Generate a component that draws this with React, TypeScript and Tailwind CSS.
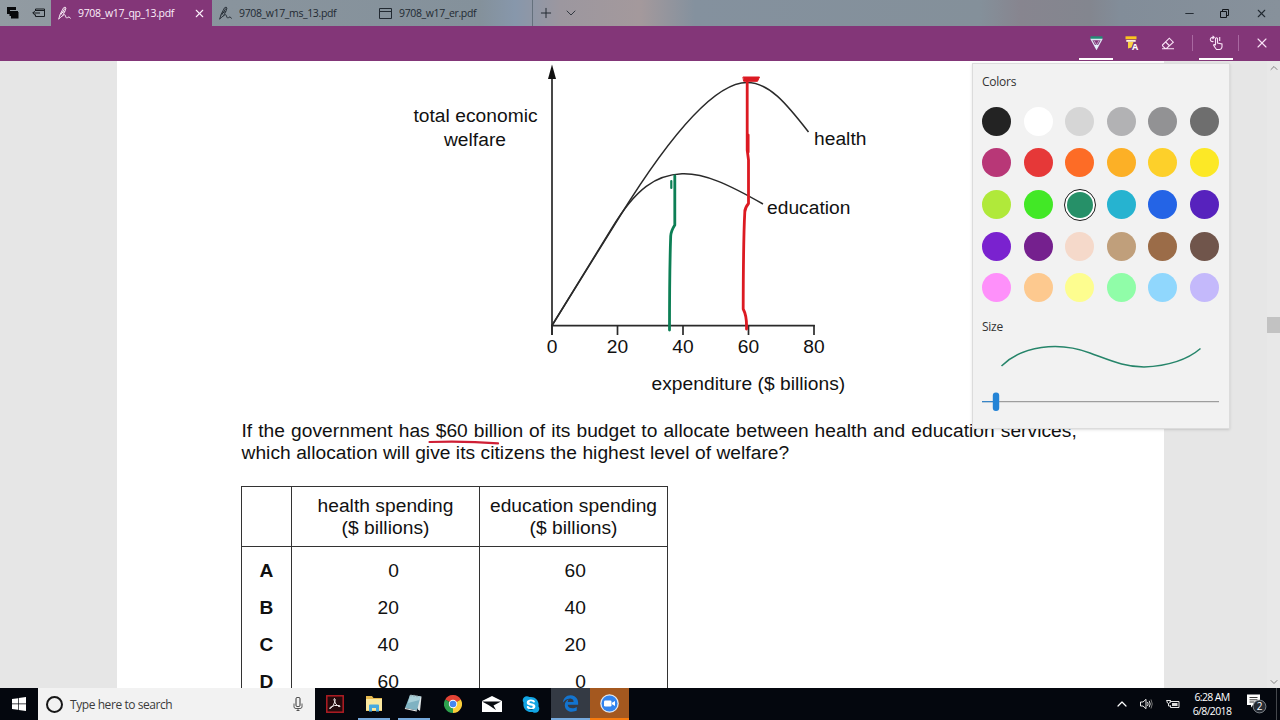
import { ChevronDown, ChevronUp, Minus, Plus, X } from 'lucide-react';
import { FaEdgeLegacy, FaSkype } from 'react-icons/fa6';

const COLORS = [
  '#232323', '#ffffff', '#d6d6d6', '#b2b2b4', '#929294', '#6e6e6e',
  '#b83777', '#e63838', '#fd6c26', '#fcb026', '#fdd02a', '#fce826',
  '#b0e93a', '#42e826', '#269068', '#26b3d0', '#2464e6', '#5722bd',
  '#7a22cf', '#75208e', '#f5d9ca', '#c09f7b', '#9b6c48', '#70554b',
  '#fe90fa', '#fdc98f', '#fdfd8f', '#90fda8', '#90d7fd', '#c4b9fb',
];
const SELECTED = '#269068';

const ROWS = [
  { key: 'A', health: '0', education: '60' },
  { key: 'B', health: '20', education: '40' },
  { key: 'C', health: '40', education: '20' },
  { key: 'D', health: '60', education: '0' },
];

const TICKS = [
  { x: 552, label: '0' },
  { x: 617.5, label: '20' },
  { x: 683, label: '40' },
  { x: 748.5, label: '60' },
  { x: 814, label: '80' },
];

function InkIcon({ className }: { className: string }) {
  return (
    <svg viewBox="0 0 13 14" className={className} fill="none" stroke="currentColor" strokeWidth="0.9" strokeLinecap="round">
      <path d="M.8 12.8 2 8.500 5.500 1.800Q7.500.300 8 2 7.500 5 4.600 9.600L.8 12.800M2.600 9 6.800 2.600M3.500 7 6.500 5.500M4.600 9.800Q7 7.600 7.400 9.600T8.600 12 10 11.200 12.500 12.200" />
    </svg>
  );
}

function TabBar() {
  return (
    <div className="flex h-[26px] shrink-0 items-center bg-[linear-gradient(90deg,#929ba2_0,#89949d_230px,#84919b_480px,#8797ab_515px,#9c979f_560px,#a4999c_640px,#84919e_695px,#84909a_980px,#87858f_1020px,#83868f_1090px,#828d99_1120px,#87919b_1280px)] text-[#222a32]">
      <div className="flex w-[51px] shrink-0 items-center gap-[13px] pl-[7px]">
        <svg viewBox="0 0 12 12" className="h-3 w-3">
          <path d="M0 0h9v3H3v4H0z" fill="#08090b" />
          <path d="M2.5 4H11v3.500H5v1.500H2.500z" fill="#08090b" />
          <path d="M4 5h7.500v6.500H4z" fill="#08090b" />
        </svg>
        <svg viewBox="0 0 13 10" className="h-2.5 w-[13px]" fill="none" stroke="#161a1f">
          <path d="M3.500 3V1h9v7.500h-9v-2M3.500 2.500h9M8 5H.8M3 2.800.8 5 3 7.200" />
        </svg>
      </div>
      <div className="flex h-full w-[161px] shrink-0 items-center bg-[#833678] pl-[7px] text-[#fdf0fb]">
        <InkIcon className="mr-[7px] h-3.5 w-[13px]" />
        <span className="w-[115px] pt-px text-[10.5px] tracking-[-0.330px]">9708_w17_qp_13.pdf</span>
        <X className="h-[13px] w-[13px]" strokeWidth={2} />
      </div>
      <div className="flex h-full w-[160px] shrink-0 items-center pl-[7px]">
        <InkIcon className="mr-[7px] h-3.5 w-[13px]" />
        <span className="pt-px text-[10.5px] tracking-[-0.370px]">9708_w17_ms_13.pdf</span>
      </div>
      <div className="flex h-full w-[161px] shrink-0 items-center border-r border-[#65717d] pl-[7px]">
        <svg viewBox="0 0 13 11" className="mr-[7px] h-[11px] w-[13px]" fill="none" stroke="currentColor">
          <path d="M.5.5h12v10H.5zM.5 3.500h12" />
        </svg>
        <span className="pt-px text-[10.5px] tracking-[-0.370px]">9708_w17_er.pdf</span>
      </div>
      <Plus className="ml-[5px] h-[16px] w-[16px]" strokeWidth={1.5} />
      <ChevronDown className="ml-[9px] h-[16px] w-[16px]" strokeWidth={1.3} />
      <div className="ml-auto flex items-center pr-3">
        <Minus className="h-[13px] w-[13px]" strokeWidth={1.8} />
        <svg viewBox="0 0 9 9" className="ml-6 h-[9px] w-[9px]" fill="none" stroke="#12161b">
          <path d="M.5 2.500h6v6h-6zM2.500 2.500v-2h6v6h-2" />
        </svg>
        <X className="ml-[26px] h-[13px] w-[13px]" strokeWidth={2} />
      </div>
    </div>
  );
}

function Toolbar() {
  return (
    <div className="flex h-[35px] shrink-0 justify-end bg-[#833678] text-[#f9e3f6]">
      <div className="flex h-[34px] w-[34px] justify-center border-b-2 border-white pt-[10px]">
        <svg viewBox="0 0 13 14" className="h-3.5 w-[13px]" fill="none">
          <path d="M.5.300h12v2.700H.5z" fill="#238b76" />
          <path d="M1.300 3.500h10.400L6.500 13z" stroke="#dce6f3" strokeWidth="1.300" />
          <path d="M4.300 9h4.400L6.500 13.300z" fill="#e8f0fa" />
          <path d="M3.800 4.500 6.500 9l2.700-4.500" stroke="#c9c3dc" strokeWidth=".8" />
        </svg>
      </div>
      <div className="flex w-[38px] justify-center pt-[10px]">
        <svg viewBox="0 0 16 16" className="ml-[2px] h-4 w-4">
          <path d="M.5.300h11v3H.5z" fill="#fbc51e" />
          <path d="M1.300 4h9.400v1.800H1.300z" fill="#fff3d8" />
          <path d="M3 6h5.500L6.500 11.500l-3.500 1z" fill="#fbd040" />
          <text x="7" y="13.600" fontSize="9" fontWeight="700" fill="#fff" fontFamily="Open Sans, sans-serif">A</text>
        </svg>
      </div>
      <div className="flex w-[34px] justify-center pt-[11px]">
        <svg viewBox="0 0 14 13" className="h-[13px] w-3.5" fill="none" stroke="currentColor" strokeWidth="1.100">
          <path d="M1.500 8 8.300 1.200 12.300 5.200 5.500 11.500H4.200L1.500 8.800zM4.700 5l4 4M1 11.700h12" />
        </svg>
      </div>
      <div className="mt-[9px] ml-[7px] h-4 w-px bg-[#a968a1]" />
      <div className="ml-[6px] flex h-[34px] w-[34px] justify-center border-b-2 border-white pt-[9px]">
        <svg viewBox="0 0 15 16" className="h-4 w-[15px]" fill="none" stroke="currentColor" strokeWidth="1.100">
          <path d="M6.500 10V3.500q1-1.500 2 0V8l4.500 1v3q-.5 2.500-2.500 2.500H7.500Q5.500 12 4.500 10q1-1 2 .5M4.500 6.500Q1.500 7 1.300 4.500 1.500 2 5 2.300M3.500.800 5.200 2.300 3.500 4M10.700 2v4" />
        </svg>
      </div>
      <div className="mt-[9px] ml-[5px] h-4 w-px bg-[#a968a1]" />
      <X className="mt-[9px] mr-[10px] ml-[15px] h-[16px] w-[16px]" strokeWidth={1.7} />
    </div>
  );
}

function WelfareChart() {
  return (
    <svg viewBox="117 61 1047 355" className="block h-[355px] w-[1047px]" fill="none" fontFamily="Liberation Sans, Arial, sans-serif">
      <g stroke="#2a2a2a" strokeWidth="1.700">
        <path d="M552 72V335M551 325.600H814.800" />
        {TICKS.map((t) => (
          <path key={t.label} d={`M${t.x} 325V335`} />
        ))}
        <path d="M552 325.500 620 216C656 158 709 82.500 747 82.500C769 82.500 786 103 808.500 132" strokeWidth="1.500" />
        <path d="M552 325.500 612 228C636 188 656 175 682 173.800C704 173 728 184 763 204" strokeWidth="1.500" />
      </g>
      <path d="M552 64.500 556 79H548z" fill="#111" />
      <g fill="#111" fontSize="19.200" letterSpacing="0.030">
        <text x="475.500" y="122" textAnchor="middle">total economic</text>
        <text x="475" y="145.500" textAnchor="middle">welfare</text>
        <text x="814" y="144.500">health</text>
        <text x="767" y="213.500">education</text>
        {TICKS.map((t) => (
          <text key={t.label} x={t.x} y="353" textAnchor="middle">{t.label}</text>
        ))}
        <text x="651.500" y="390">expenditure ($ billions)</text>
      </g>
      {/* ink strokes */}
      <g strokeLinecap="round" strokeLinejoin="round">
        <path d="M674.800 176V225Q671 231 670.700 236 669.500 270 669.500 330" stroke="#0c7f55" strokeWidth="2.800" />
        <path d="M671.300 181V188" stroke="#0c7f55" strokeWidth="2.200" />
        <path d="M747.200 82V150L748.500 160V203.500Q744.800 208 744.800 212 743.300 240 743.200 309 747 316 746.500 329" stroke="#dc1a22" strokeWidth="2.800" />
        <path d="M748.300 135V152" stroke="#dc1a22" strokeWidth="2.500" />
        <path d="M743.300 77H759.500L757.500 81.300H744z" fill="#dc1a22" stroke="#dc1a22" strokeWidth="1" />
      </g>
    </svg>
  );
}

function AnswerTable() {
  return (
    <div className="mt-[21px] ml-[124px] w-[427px] border border-b-0 border-[#333]">
      <div className="flex h-[60px] border-b border-[#333] text-center leading-[22px]">
        <div className="w-[50px] border-r border-[#333]" />
        <div className="w-[188px] border-r border-[#333] pt-2">health spending<br />($ billions)</div>
        <div className="flex-1 pt-2">education spending<br />($ billions)</div>
      </div>
      {/* the page runs on below the visible area */}
      <div className="flex h-[160px] leading-[37px]">
        <div className="w-[50px] border-r border-[#333] pt-[5px] text-center font-bold">
          {ROWS.map((row) => <div key={row.key}>{row.key}</div>)}
        </div>
        <div className="w-[188px] border-r border-[#333] pt-[5px] pr-[80px] text-right">
          {ROWS.map((row) => <div key={row.key}>{row.health}</div>)}
        </div>
        <div className="flex-1 pt-[5px] pr-[81px] text-right">
          {ROWS.map((row) => <div key={row.key}>{row.education}</div>)}
        </div>
      </div>
    </div>
  );
}

function PenPanel() {
  return (
    <div className="absolute top-[2px] left-[972px] h-[366px] w-[258px] border border-[#dcdcdc] bg-[#f2f2f2] px-[9px] text-[12px] text-[#333] shadow-sm">
      <div className="mt-[9px] h-[17px] leading-[17px] tracking-[-0.250px]">Colors</div>
      <div className="mt-[16.700px] grid grid-cols-[repeat(6,29px)] gap-x-[12.600px] gap-y-[12.700px]">
        {COLORS.map((c) => (
          <div key={c} className="relative h-[29px] w-[29px]">
            {c === SELECTED && <div className="absolute -inset-[1.500px] rounded-full border-[1.500px] border-[#1c1c1c] bg-white" />}
            <div
              className={c === SELECTED ? 'absolute inset-[1.500px] rounded-full' : 'absolute inset-0 rounded-full'}
              style={{ backgroundColor: c }}
            />
          </div>
        ))}
      </div>
      <div className="mt-[15.500px] h-[17px] leading-[17px] tracking-[-0.250px]">Size</div>
      <svg viewBox="982 335 237 80" className="mt-[0.500px] block h-[80px] w-[237px]" fill="none">
        <path d="M1001.500 366C1022 346 1058 341 1090 353C1112 361 1125 367 1144 367C1166 366 1186 361 1200.500 348.500" stroke="#26856a" strokeWidth="1.500" />
        <path d="M982 401.700H1219" stroke="#8b8b8b" />
        <path d="M982 401.700H996" stroke="#1f7fd0" />
        <rect x="992.800" y="392.500" width="6.400" height="18.500" rx="3" fill="#2484d6" />
      </svg>
    </div>
  );
}

function Taskbar() {
  return (
    <div className="flex h-8 shrink-0 bg-[#04070e] text-white">
      <div className="flex w-[38px] items-center justify-center">
        <svg viewBox="0 0 14 14" className="h-3.5 w-3.5" fill="#fff">
          <path d="M0 2 6 1.200V6.600H0zM6.700 1.100 14 0V6.600H6.700zM0 7.300H6V12.700L0 11.900zM6.700 7.300H14V14L6.700 12.900z" />
        </svg>
      </div>
      <div className="flex w-[277px] items-center bg-[#f2f2f2] pr-[12px] pl-2 text-[#3b3b3b]">
        <div className="h-[17px] w-[17px] rounded-full border-[2.500px] border-[#171717]" />
        <span className="ml-[7px] pt-[2px] text-[12px] tracking-[-0.430px]">Type here to search</span>
        <svg viewBox="0 0 10 14" className="ml-auto h-3.5 w-2.5" fill="none" stroke="#333">
          <rect x="3" y=".5" width="4" height="9" rx="1.200" />
          <path d="M1 6.500V10Q1.200 11.500 3 11.500H7Q8.800 11.500 9 10V6.500M5 11.500V13.500M3.500 13.500H6.500" strokeWidth=".8" />
        </svg>
      </div>
      <div className="flex w-[39px] items-center justify-center">
        <svg viewBox="0 0 18 18" className="h-[18px] w-[18px]" fill="none">
          <rect x=".8" y=".8" width="16.400" height="16.400" fill="#240b0d" stroke="#b11d24" strokeWidth="1.500" />
          <path d="M8.500 3.500Q9.500 3.500 9 6 8 10.500 4.500 13.500 3 14 4 12.500 8 9.500 13.500 10.500 15 11.500 13 11.800 9 9.500 8 5 7.800 3.500 8.500 3.500z" stroke="#f0e8e8" />
        </svg>
      </div>
      <div className="flex w-[40px] justify-center">
        <div className="flex w-8 justify-center border-b-2 border-[#76a9dc] pt-[7px]">
          <svg viewBox="0 0 18 17" className="h-[17px] w-[18px]">
            <path d="M1 1h6l1.500 2H17v13H1z" fill="#e6b94f" />
            <path d="M1 4h16v11.500H1z" fill="#fbe8a0" />
            <path d="M4 16.500V10.500Q4 9.500 5 9.500h8q1 0 1 1v6h-3V13H7v3.500z" fill="#48a9df" />
          </svg>
        </div>
      </div>
      <div className="flex w-[39px] justify-center">
        <div className="flex w-8 justify-center border-b-2 border-[#76a9dc] pt-[6px]">
          <svg viewBox="0 0 19 18" className="h-[18px] w-[19px]">
            <path d="M6 1 17.500 2.500 16 17 14 15.500z" fill="#e1e7e8" />
            <path d="M6 1 16.500 2.500 13 16.500 1 14z" fill="#7fb2c2" />
            <path d="M6 1 16.500 2.500 15.500 6 4 9z" fill="#a9d0d9" />
            <path d="M1 14 13 16.500 12.600 17.500.8 15z" fill="#eee" />
            <path d="M7 .5v2M10 .8v2M13 1.200v2" stroke="#8c999d" />
          </svg>
        </div>
      </div>
      <div className="flex w-[39px] items-center justify-center">
        <svg viewBox="0 0 18 18" className="h-[18px] w-[18px]">
          <path d="M9 9 1.200 4.500A9 9 0 0 1 16.800 4.500z" fill="#e34335" />
          <path d="M9 9 16.800 4.500A9 9 0 0 1 9 18z" fill="#fbce3b" />
          <path d="M9 9 9 18A9 9 0 0 1 1.200 4.500z" fill="#2da14d" />
          <path d="M9 5H16.800V4.500L9 2z" fill="#e34335" />
          <circle cx="9" cy="9" r="4.200" fill="#fff" />
          <circle cx="9" cy="9" r="3.300" fill="#4587f1" />
        </svg>
      </div>
      <div className="flex w-[39px] items-center justify-center">
        <svg viewBox="0 0 20 16" className="h-4 w-5">
          <path d="M0 5 10 0 20 5V16H0z" fill="#fff" />
          <path d="M0 5.500H19L11.500 9.500 14 14 6.500 9z" fill="#080b10" />
        </svg>
      </div>
      <div className="flex w-[40px] items-center justify-center">
        <div className="relative flex h-[18px] w-[18px] items-center justify-center">
          <div className="absolute inset-[4px] bg-white" />
          <FaSkype className="relative h-[19px] w-[19px] text-[#12a5e4]" />
        </div>
      </div>
      <div className="flex w-[39px] items-center justify-center border-b-2 border-[#76a9dc] bg-[#343a44] pt-px">
        <FaEdgeLegacy className="h-[17px] w-[17px] text-[#1374cf]" />
      </div>
      <div className="flex w-[39px] items-center justify-center border-b-2 border-[#f77b0e] bg-[#a4581f] pt-px">
        <svg viewBox="0 0 19 19" className="h-[19px] w-[19px]">
          <circle cx="9.500" cy="9.500" r="9.300" fill="#e2e8f1" />
          <circle cx="9.500" cy="9.500" r="8" fill="#3284ee" />
          <rect x="4" y="6.500" width="7.500" height="6" rx="1.200" fill="#fff" />
          <path d="M12 8.800 15 7V12L12 10.300z" fill="#fff" />
        </svg>
      </div>
      <div className="ml-auto flex items-center">
        <ChevronUp className="mr-[-2px] h-[16px] w-[16px]" strokeWidth={1.8} />
        <svg viewBox="0 0 13 12" className="ml-3 h-3 w-[13px]" fill="none" stroke="#e8e8e8">
          <path d="M.5 4H3L6 1.300V10.700L3 8H.5zM7.500 4Q8.800 6 7.500 8M9.200 2.800Q11.200 6 9.200 9.200" />
          <path d="M11 1.500Q13.500 6 11 10.500" stroke="#777" />
        </svg>
        <svg viewBox="0 0 14 10" className="ml-[13px] h-2.5 w-3.5" fill="none" stroke="#e8e8e8">
          <path d="M4.500 3.500V2.500H13V8.500H4.500V6.500" />
          <path d="M6 4h5.500v3H6z" fill="#ddd" stroke="none" />
          <path d="M1 1V3Q1.500 4.500 2.500 4.500T4.200 3V1M.5 1.500H4.700M2.500 4.500V7H5" />
        </svg>
        <div className="ml-[11px] w-[42px] text-center text-[10.500px] leading-[14px] tracking-[-0.650px] whitespace-nowrap">
          6:28 AM<br />6/8/2018
        </div>
        <div className="relative ml-[14px] h-5 w-5">
          <svg viewBox="0 0 20 20" className="h-5 w-5">
            <path d="M0 .5H13V11H6L4 13.500V11H0z" fill="#fff" />
            <path d="M2.500 3.500h8M2.500 5.800h8M2.500 8h5" stroke="#222" strokeWidth=".9" />
            <circle cx="12.500" cy="12.500" r="6.400" fill="#262b33" stroke="#858a90" strokeWidth=".9" />
            <text x="12.500" y="16" textAnchor="middle" fontSize="10" fill="#fff" fontFamily="Open Sans, sans-serif">2</text>
          </svg>
        </div>
        <div className="ml-[9px] h-8 w-[4px] border-l border-[#44474c]" />
      </div>
    </div>
  );
}

export default function App() {
  return (
    <div className="flex h-[720px] w-[1280px] flex-col overflow-hidden bg-[#e6e6e6] font-['Open_Sans','Noto_Sans',sans-serif]">
      <TabBar />
      <Toolbar />
      <div className="relative flex min-h-0 flex-1 overflow-hidden">
        <div className="ml-[117px] w-[1047px] shrink-0 bg-white font-['Liberation_Sans',Arial,sans-serif] text-[19.200px] tracking-[0.040px] text-[#111]">
          <WelfareChart />
          <div className="relative mt-[4px] ml-[124.500px] leading-[22.300px] whitespace-nowrap">
            <span className="[word-spacing:0.600px]">
              If the government has $60 billion of its budget to allocate between health and education services,
            </span>
            <br />
            which allocation will give its citizens the highest level of welfare?
            <svg viewBox="0 0 72 5" className="absolute top-[20px] left-[186.500px] h-[5px] w-[72px]" fill="none">
              <path d="M1.500 2Q36 .800 70 3.300" stroke="#cf1f35" strokeWidth="2.200" strokeLinecap="round" />
            </svg>
          </div>
          <AnswerTable />
        </div>
        <div className="ml-auto flex w-[13px] flex-col items-center justify-between bg-[#e8e8e8] text-[#777]">
          <ChevronUp className="mt-px h-3 w-3" strokeWidth={1.8} />
          <div className="mt-[-100px] h-4 w-[13px] bg-[#c2c2c2]" />
          <ChevronDown className="h-3 w-3" strokeWidth={1.8} />
        </div>
        <PenPanel />
      </div>
      <Taskbar />
    </div>
  );
}
